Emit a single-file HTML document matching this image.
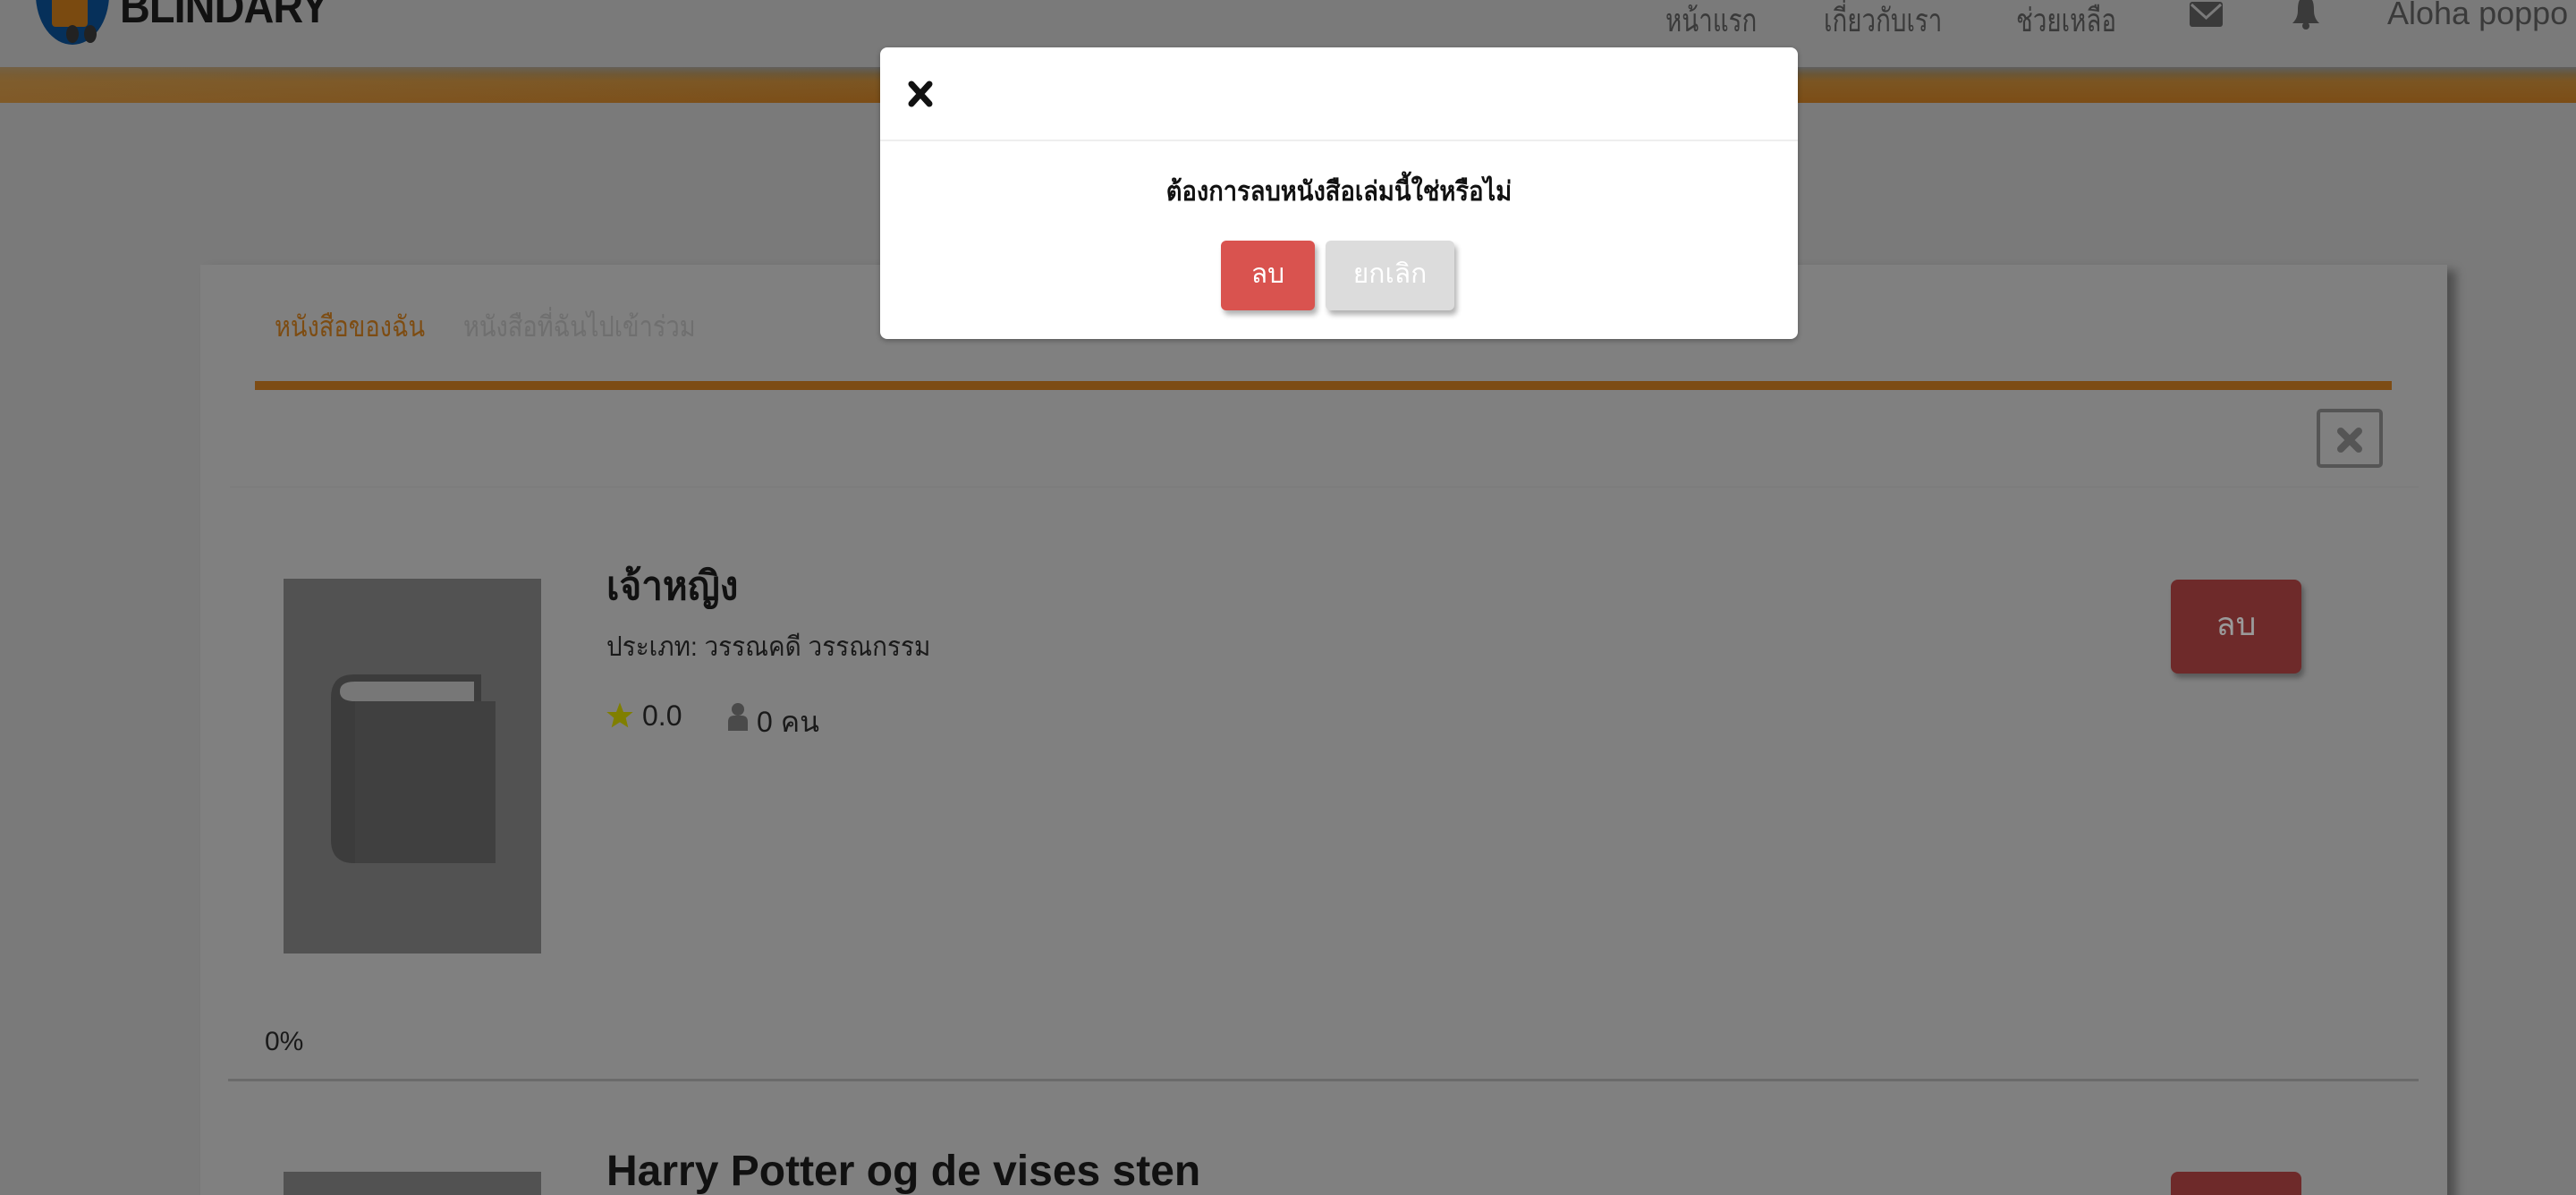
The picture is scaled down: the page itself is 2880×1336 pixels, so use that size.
<!DOCTYPE html>
<html><head><meta charset="utf-8"><style>
*{margin:0;padding:0;box-sizing:border-box}
html,body{width:2880px;height:1336px;overflow:hidden}
body{background:#7a7a7a;font-family:"Liberation Sans","DejaVu Sans",sans-serif;position:relative}
.a{position:absolute;white-space:nowrap}
.nav{color:#3a3a3a;font-size:36px;top:-6px;font-weight:300;transform:scaleX(.77);transform-origin:left}
</style></head><body>
<div class="a" style="left:40px;top:-62px;width:82px;height:112px;border-radius:50%;background:#06305a"></div>
<div class="a" style="left:58px;top:-10px;width:40px;height:40px;background:#7a4a10;border-radius:4px"></div>
<div class="a" style="left:74px;top:28px;width:14px;height:20px;border-radius:50%;background:#222"></div>
<div class="a" style="left:94px;top:28px;width:14px;height:20px;border-radius:50%;background:#222"></div>
<div class="a" style="left:134px;top:-22px;font-size:52px;font-weight:bold;color:#111;letter-spacing:-1px;transform:scaleX(0.9);transform-origin:left">BLINDARY</div>
<div class="a nav" style="left:1862px">หน้าแรก</div>
<div class="a nav" style="left:2039px">เกี่ยวกับเรา</div>
<div class="a nav" style="left:2254px">ช่วยเหลือ</div>
<svg class="a" style="left:2448px;top:2px" width="37" height="28" viewBox="0 0 37 28"><rect width="37" height="28" rx="3" fill="#3a3a3a"/><path d="M2 3 L18.5 18 L35 3" stroke="#7a7a7a" stroke-width="3" fill="none"/></svg>
<svg class="a" style="left:2562px;top:-4px" width="32" height="38" viewBox="0 0 32 38"><path d="M16 0 C8 0 7 8 7 16 C7 24 3 28 1 30 L31 30 C29 28 25 24 25 16 C25 8 24 0 16 0Z" fill="#3a3a3a"/><circle cx="16" cy="33" r="4" fill="#3a3a3a"/></svg>
<div class="a" style="left:2669px;top:-6px;color:#3a3a3a;font-size:36px">Aloha poppo</div>
<div class="a" style="left:0;top:75px;width:2880px;height:40px;background:linear-gradient(#5f5f5f 0,#6a5636 8px,#7b5522 16px,#7c4d16 100%)"></div>
<div class="a" style="left:0;top:75px;width:1000px;height:40px;background:linear-gradient(90deg,rgba(130,98,52,.6),rgba(0,0,0,0))"></div>
<div class="a" style="left:224px;top:296px;width:2512px;height:1100px;background:#808080;box-shadow:10px 6px 10px rgba(0,0,0,.35)"></div>
<div class="a" style="left:307px;top:340px;font-size:32px;color:#7d4c12;transform:scaleX(.85);transform-origin:left">หนังสือของฉัน</div>
<div class="a" style="left:518px;top:340px;font-size:32px;color:#6f6f6f;transform:scaleX(.85);transform-origin:left">หนังสือที่ฉันไปเข้าร่วม</div>
<div class="a" style="left:285px;top:426px;width:2389px;height:10px;background:#7d4c14"></div>
<div class="a" style="left:2590px;top:457px;width:74px;height:66px;border:4px solid #555;border-radius:5px"></div>
<svg class="a" style="left:2612px;top:477px" width="30" height="30" viewBox="0 0 30 30"><path d="M5 5 L25 25 M25 5 L5 25" stroke="#555" stroke-width="8" stroke-linecap="round"/></svg>
<div class="a" style="left:257px;top:544px;width:2447px;height:1px;background:#7a7a7a"></div>
<div class="a" style="left:317px;top:647px;width:288px;height:419px;background:#525252"></div>
<svg class="a" style="left:370px;top:754px" width="184" height="212" viewBox="0 0 184 212"><path d="M26 0 H168 V30 H184 V211 H26 Q0 211 0 185 V26 Q0 0 26 0Z" fill="#3c3c3c"/><path d="M27 8 H160 V30 H27 Q10 30 10 19 Q10 8 27 8Z" fill="#777"/><rect x="27" y="30" width="157" height="181" fill="#404040"/></svg>
<div class="a" style="left:678px;top:620px;font-size:44px;font-weight:bold;color:#111;transform:scaleX(.96);transform-origin:left">เจ้าหญิง</div>
<div class="a" style="left:678px;top:700px;font-size:30px;color:#1a1a1a;transform:scaleX(.93);transform-origin:left">ประเภท: วรรณคดี วรรณกรรม</div>
<svg class="a" style="left:677px;top:784px" width="32" height="32" viewBox="0 0 24 24"><path d="M12 1 L15 9 L23 9 L17 14 L19 22 L12 17.5 L5 22 L7 14 L1 9 L9 9Z" fill="#807f00"/></svg>
<div class="a" style="left:718px;top:782px;font-size:32px;color:#1a1a1a">0.0</div>
<svg class="a" style="left:813px;top:785px" width="24" height="32" viewBox="0 0 24 32"><circle cx="12" cy="8" r="7" fill="#4a4a4a"/><path d="M1 32 V22 Q1 15 8 15 H16 Q23 15 23 22 V32Z" fill="#4a4a4a"/></svg>
<div class="a" style="left:846px;top:782px;font-size:32px;color:#1a1a1a">0 คน</div>
<div class="a" style="left:2427px;top:648px;width:146px;height:105px;background:#6e2a2a;border-radius:8px;box-shadow:3px 5px 6px rgba(0,0,0,.3);color:#9a9a9a;font-size:36px;text-align:center;line-height:100px">ลบ</div>
<div class="a" style="left:296px;top:1148px;font-size:30px;color:#1a1a1a">0%</div>
<div class="a" style="left:255px;top:1206px;width:2449px;height:3px;background:#6a6a6a"></div>
<div class="a" style="left:317px;top:1310px;width:288px;height:60px;background:#525252"></div>
<div class="a" style="left:678px;top:1282px;font-size:48px;font-weight:bold;color:#111;transform:scaleX(1.0);transform-origin:left">Harry Potter og de vises sten</div>
<div class="a" style="left:2427px;top:1310px;width:146px;height:60px;background:#6e2a2a;border-radius:8px"></div>
<div class="a" style="left:984px;top:53px;width:1026px;height:326px;background:#fff;border-radius:8px;box-shadow:0 2px 6px rgba(0,0,0,.3)">
 <svg class="a" style="left:30px;top:36px" width="30" height="32" viewBox="0 0 30 32"><path d="M5 5 L25 27 M25 5 L5 27" stroke="#111" stroke-width="7" stroke-linecap="round"/></svg>
 <div class="a" style="left:0;top:103px;width:1026px;height:2px;background:#eee"></div>
 <div class="a" style="left:0;top:138px;width:1026px;text-align:center;font-size:30px;font-weight:bold;color:#111;transform:scaleX(.91)">ต้องการลบหนังสือเล่มนี้ใช่หรือไม่</div>
 <div class="a" style="left:381px;top:216px;width:105px;height:78px;background:#d9534f;border-radius:6px;box-shadow:3px 5px 6px rgba(0,0,0,.3);color:#fff;font-size:30px;text-align:center;line-height:76px">ลบ</div>
 <div class="a" style="left:498px;top:216px;width:144px;height:78px;background:#dcdcdc;border-radius:6px;box-shadow:3px 5px 6px rgba(0,0,0,.3);color:#fff;font-size:30px;text-align:center;line-height:76px">ยกเลิก</div>
</div>
</body></html>
